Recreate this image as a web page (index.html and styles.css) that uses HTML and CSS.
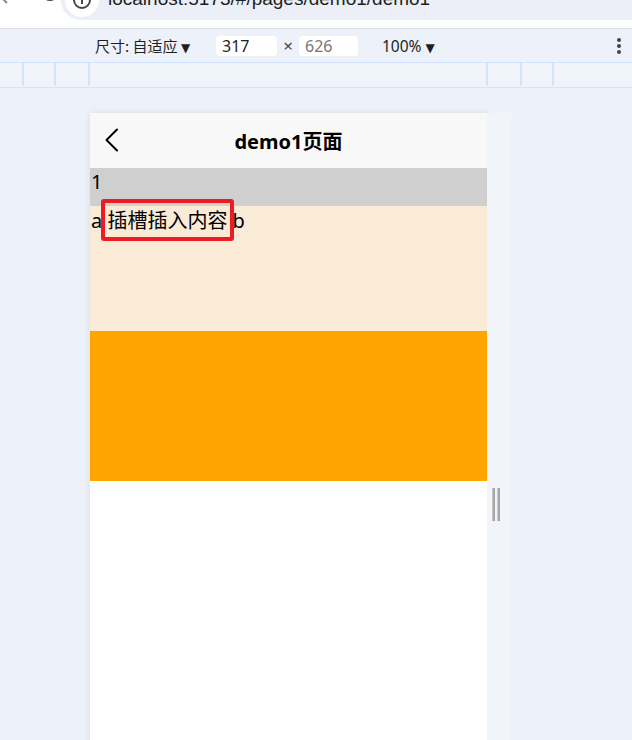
FILE: index.html
```html
<!DOCTYPE html>
<html lang="zh-CN">
<head>
<meta charset="utf-8">
<title>demo1</title>
<link rel="stylesheet" href="styles.css">
</head>
<body>
<div class="topbar">
  <div class="nav-icons">
    <svg class="fwd" width="14" height="14" viewBox="0 0 14 14"><path d="M-2 -6 L7 3" stroke="#8a8a8a" stroke-width="2" fill="none"/></svg>
    <svg class="reload" width="20" height="20" viewBox="0 0 20 20"><path d="M2 0 A7 7 0 0 0 16 0" stroke="#474747" stroke-width="2.2" fill="none"/></svg>
  </div>
  <div class="omnibox">
    <span class="chip"><svg width="22" height="22" viewBox="0 0 22 22"><circle cx="11" cy="11" r="8" stroke="#474747" stroke-width="2" fill="none"/><rect x="10" y="10" width="2" height="5" fill="#474747"/></svg></span>
    <span class="url">localhost:5173/#/pages/demo1/demo1</span>
  </div>
</div>

<div class="devbar">
  <span class="dim-label">尺寸: 自适应 <span class="caret">▼</span></span>
  <span class="field">317</span>
  <span class="times">×</span>
  <span class="field muted">626</span>
  <span class="zoom">100% <span class="caret">▼</span></span>
  <span class="spacer"></span>
  <span class="kebab"><i></i><i></i><i></i></span>
</div>

<div class="ruler">
  <span class="tick t1"></span>
  <span class="tick t2"></span>
  <span class="tick t3"></span>
  <span class="tick t4"></span>
  <span class="tick t5"></span>
  <span class="tick t6"></span>
</div>

<div class="canvas">
  <div class="device">
    <div class="navbar">
      <svg class="back" width="20" height="26" viewBox="0 0 20 26"><path d="M13 2.5 L2.5 13 L13 23.5" stroke="#000" stroke-width="2" fill="none" stroke-linecap="round" stroke-linejoin="round"/></svg>
      <span class="title">demo1页面</span>
    </div>
    <div class="row-gray">1</div>
    <div class="row-beige">a <span class="slot">插槽插入内容<span class="mark"></span></span> b</div>
    <div class="row-orange"></div>
  </div>
  <div class="side">
    <span class="handle"><i></i><i></i></span>
  </div>
</div>
</body>
</html>
```

FILE: styles.css
```css
html, body {
  margin: 0;
  padding: 0;
}
body {
  width: 632px;
  height: 740px;
  overflow: hidden;
  background: #edf1f9;
  font-family: "Noto Sans", "Noto Sans CJK SC", sans-serif;
  color: #1f1f1f;
}

/* browser top bar */
.topbar {
  height: 28px;
  background: #ffffff;
  border-bottom: 1px solid #dadde2;
  display: flex;
  overflow: hidden;
}
.nav-icons {
  width: 80px;
  display: flex;
  align-items: flex-start;
}
.reload {
  margin-left: 27px;
  margin-top: -7px;
}
.omnibox {
  flex: none;
  width: 600px;
  height: 40px;
  margin-top: -20px;
  border-radius: 20px;
  background: #eceff7;
  display: flex;
  align-items: center;
}
.chip {
  width: 34px;
  height: 34px;
  margin-left: 4px;
  border-radius: 50%;
  background: #ffffff;
  display: flex;
  align-items: center;
  justify-content: center;
}
.url {
  margin-left: 9px;
  margin-top: -3px;
  font-family: "Liberation Sans", "Noto Sans", sans-serif;
  font-size: 19px;
  color: #1f1f1f;
  white-space: nowrap;
}

/* device toolbar */
.devbar {
  height: 33px;
  background: #edf1fa;
  display: flex;
  align-items: center;
  padding-left: 95px;
  padding-right: 12px;
  font-family: "Noto Sans CJK SC", sans-serif;
  font-size: 15px;
  color: #1f1f1f;
}
.caret {
  font-size: 12px;
  font-family: "DejaVu Sans", sans-serif;
}
.dim-label {
  width: 121px;
}
.field {
  width: 61px;
  height: 20px;
  box-sizing: border-box;
  padding-left: 6px;
  background: #ffffff;
  border-radius: 4px;
  font-family: "Noto Sans", sans-serif;
  font-size: 16px;
  line-height: 20px;
  color: #1f1f1f;
}
.field.muted {
  width: 59px;
  color: #777777;
}
.times {
  width: 22px;
  text-align: center;
  font-family: "Noto Sans", sans-serif;
  font-size: 17px;
  color: #444444;
}
.zoom {
  margin-left: 24px;
  font-family: "Noto Sans", sans-serif;
  font-size: 15.5px;
}
.spacer {
  flex: 1;
}
.kebab {
  display: flex;
  flex-direction: column;
  gap: 2px;
  margin-right: -1px;
}
.kebab i {
  display: block;
  width: 4px;
  height: 4px;
  border-radius: 50%;
  background: #444444;
}

/* ruler */
.ruler {
  height: 24px;
  background: #eff3fa;
  border-top: 1px solid #d3e3fd;
  border-bottom: 1px solid #d3e3fd;
  display: flex;
  align-items: flex-start;
}
.tick {
  width: 2px;
  height: 23px;
  background: #d3e3fd;
  flex: none;
}
.t1 { margin-left: 22px; }
.t2 { margin-left: 30px; }
.t3 { margin-left: 32px; }
.t4 { margin-left: 396px; }
.t5 { margin-left: 32px; }
.t6 { margin-left: 30px; }

/* canvas */
.canvas {
  height: 652px;
  box-sizing: border-box;
  overflow: hidden;
  display: flex;
  padding-left: 90px;
  padding-top: 25px;
  align-items: flex-start;
}
.device {
  width: 397px;
  height: 782px;
  flex: none;
  background: #ffffff;
  box-shadow: 0 0 6px rgba(60, 70, 90, 0.12);
  font-family: "Noto Sans", "Noto Sans CJK SC", sans-serif;
  font-size: 20px;
  color: #000000;
}
.navbar {
  height: 55px;
  background: #f8f8f8;
  display: flex;
  align-items: center;
  justify-content: center;
  position: relative;
}
.back {
  position: absolute;
  left: 14px;
  top: 14px;
}
.title {
  font-weight: bold;
  font-size: 20px;
}
.row-gray {
  height: 38px;
  background: #cfcfcf;
  line-height: 28px;
  padding-left: 1px;
}
.row-beige {
  height: 125px;
  background: #faebd7;
  line-height: 28px;
  padding-left: 1px;
}
.slot {
  position: relative;
  font-family: "Noto Sans CJK SC", sans-serif;
}
.mark {
  position: absolute;
  left: -6px;
  right: -7px;
  top: -6px;
  bottom: -7px;
  border: 4px solid #ec1c24;
  border-radius: 3px;
  pointer-events: none;
}
.row-orange {
  height: 150px;
  background: #ffa500;
}
.side {
  width: 24px;
  height: 782px;
  flex: none;
  background: #f1f4f9;
  display: flex;
  align-items: center;
  padding-left: 5px;
  box-sizing: border-box;
}
.handle {
  display: flex;
  gap: 2px;
}
.handle i {
  display: block;
  width: 2px;
  height: 33px;
  background: #a6a6a6;
  border-left: 1px solid #c8c8c8;
}
```
